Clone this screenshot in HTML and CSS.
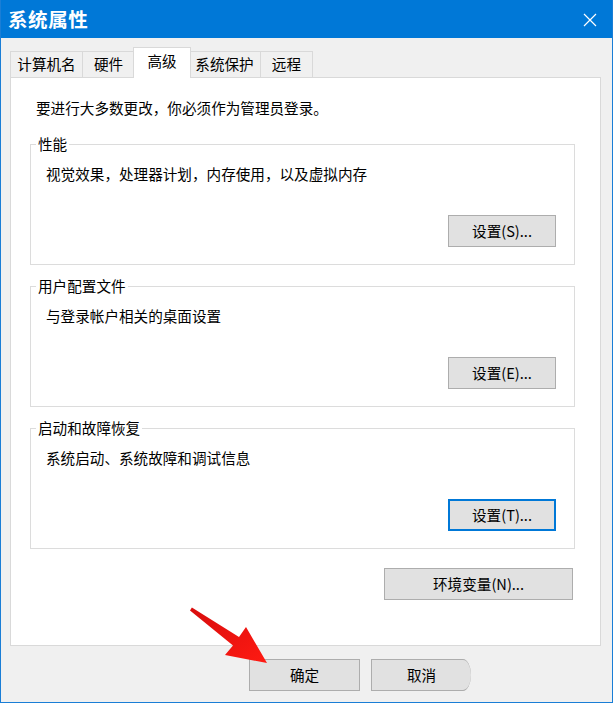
FILE: index.html
```html
<!DOCTYPE html>
<html lang="zh-CN">
<head>
<meta charset="utf-8">
<title>系统属性</title>
<link rel="stylesheet" href="styles.css">
</head>
<body>
<div class="window">
  <div class="titlebar">
    <span class="title">系统属性</span>
    <svg class="close" width="14" height="14" viewBox="0 0 14 14"><path d="M1 1 L13 13 M13 1 L1 13" stroke="#fff" stroke-width="1.2" fill="none"/></svg>
  </div>
  <div class="body">
    <div class="tabs">
      <div class="tab">计算机名</div>
      <div class="tab">硬件</div>
      <div class="tab active">高级</div>
      <div class="tab">系统保护</div>
      <div class="tab">远程</div>
    </div>
    <div class="panel">
      <p class="intro">要进行大多数更改，你必须作为管理员登录。</p>
      <fieldset class="group">
        <legend>性能</legend>
        <p class="desc">视觉效果，处理器计划，内存使用，以及虚拟内存</p>
        <div class="row"><button class="btn">设置(S)...</button></div>
      </fieldset>
      <fieldset class="group">
        <legend>用户配置文件</legend>
        <p class="desc">与登录帐户相关的桌面设置</p>
        <div class="row"><button class="btn">设置(E)...</button></div>
      </fieldset>
      <fieldset class="group">
        <legend>启动和故障恢复</legend>
        <p class="desc">系统启动、系统故障和调试信息</p>
        <div class="row"><button class="btn focus">设置(T)...</button></div>
      </fieldset>
      <div class="row env-row"><button class="btn env">环境变量(N)...</button></div>
    </div>
    <div class="footer">
      <button class="btn dlg">确定</button>
      <button class="btn dlg cut">取消</button>
    </div>
  </div>
  <svg class="arrow" width="613" height="703" viewBox="0 0 613 703">
    <defs>
      <linearGradient id="ag" x1="0" y1="0" x2="1" y2="1">
        <stop offset="0" stop-color="#d80d0d"/>
        <stop offset="1" stop-color="#ff1a12"/>
      </linearGradient>
    </defs>
    <polygon points="191.9,607.6 239,637 246,627 267,663 225,655 233,645.5 190,610.6" fill="url(#ag)"/>
  </svg>
</div>
</body>
</html>
```
FILE: styles.css
```css
* { box-sizing: border-box; }
html, body { margin: 0; padding: 0; background: #f0f0f0; }
body {
  font-family: "Noto Sans CJK SC", "Noto Sans", sans-serif;
  font-size: 14.6px;
  color: #000;
}
.window {
  position: relative;
  width: 613px;
  height: 703px;
  background: #f0f0f0;
  border-left: 1px solid #1a7ed6;
  border-right: 1px solid #1a7ed6;
  border-bottom: 1px solid #1a7ed6;
  overflow: hidden;
}
.titlebar {
  height: 38px;
  background: #0078d7;
  display: flex;
  align-items: center;
  justify-content: space-between;
  padding: 0 15px 0 7px;
}
.title {
  color: #fff;
  font-size: 19.5px;
  font-weight: 700;
  line-height: 24px;
  letter-spacing: 0.6px;
}
.close { display: block; margin-top: 2px; }
.body { padding: 0 0 0 9px; }
.tabs {
  display: flex;
  align-items: flex-end;
  margin-top: 9px;
  height: 30px;
  position: relative;
  z-index: 2;
}
.tab {
  height: 26px;
  min-width: 53px;
  padding: 0 6.3px;
  border: 1px solid #d9d9d9;
  border-bottom: none;
  margin-left: -1px;
  background: #f0f0f0;
  line-height: 24px;
  text-align: center;
  white-space: nowrap;
}
.tab:first-child { margin-left: 0; }
.tab.active {
  height: 31px;
  min-width: 58px;
  margin: 0 -2px -1px -2px;
  background: #fff;
  line-height: 26px;
  position: relative;
  z-index: 3;
}
.panel {
  width: 591px;
  height: 569px;
  background: #fff;
  border: 1px solid #d9d9d9;
  padding: 20px 0 0 19px;
  display: flex;
  flex-direction: column;
  align-items: flex-start;
}
.intro {
  margin: 0 0 16px 6px;
  line-height: 20px;
}
.group {
  width: 545px;
  margin: 0 0 11px 0;
  padding: 10px 18px 17px 15px;
  border: 1px solid #dcdcdc;
  min-width: 0;
}
.group legend {
  padding: 0 2px;
  margin-left: -10px;
  line-height: 20px;
}
.desc {
  margin: 0;
  line-height: 20px;
}
.row {
  display: flex;
  justify-content: flex-end;
  margin-top: 31px;
}
.btn {
  font-family: inherit;
  font-size: 14.6px;
  color: #000;
  height: 32px;
  background: #e1e1e1;
  border: 1px solid #adadad;
  padding: 0;
  line-height: 28px;
}
.group .btn { width: 108px; }
.btn.focus { border: 2px solid #0078d7; }
.env-row {
  margin-top: 8px;
  width: 543px;
}
.btn.env { width: 189px; }
.footer {
  display: flex;
  gap: 11px;
  padding-left: 239px;
  margin-top: 13px;
}
.btn.dlg { width: 111px; }
.btn.cut {
  width: 100px;
  border-right: none;
  border-top-right-radius: 8px 16px;
  border-bottom-right-radius: 8px 16px;
}
.arrow {
  position: absolute;
  left: -1px;
  top: 0;
  pointer-events: none;
  z-index: 10;
}
```
